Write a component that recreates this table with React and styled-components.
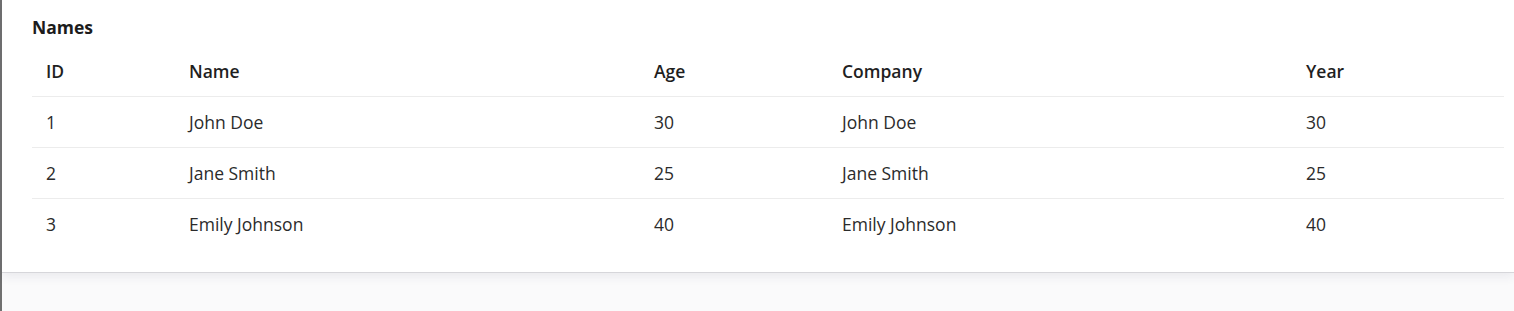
import React from "react";
import styled, { createGlobalStyle } from "styled-components";

const GlobalStyle = createGlobalStyle`
  html, body {
    margin: 0;
    padding: 0;
    background: #fafafb;
    font-family: "Open Sans", "Liberation Sans", sans-serif;
    color: #212121;
  }
`;

const Page = styled.div`
  min-height: 311px;
  border-left: 2px solid #707070;
  background: #fafafb;
`;

const Card = styled.section`
  background: #ffffff;
  padding: 15px 10px 23px 30px;
  border-bottom: 1px solid #d6d6da;
  box-shadow: 0 3px 10px rgba(60, 60, 90, 0.09);
`;

const Title = styled.h2`
  margin: 0 0 5px;
  font-size: 17.5px;
  font-weight: 700;
  line-height: 25px;
  color: #1c1c1c;
`;

const Table = styled.table`
  width: 100%;
  border-collapse: collapse;
  table-layout: fixed;
  font-size: 17.5px;
`;

const Th = styled.th`
  box-sizing: border-box;
  width: ${(p) => p.$w}px;
  text-align: left;
  font-weight: 600;
  padding: 14px 14px 13px;
  line-height: 24px;
  border-bottom: 1px solid #ececec;
  color: #1f1f1f;
`;

const Row = styled.tr`
  &:not(:last-child) td {
    border-bottom: 1px solid #ececec;
  }
`;

const Td = styled.td`
  padding: 13px 14px;
  line-height: 24px;
  color: #2b2b2b;
`;

const columns = [
  { key: "id", label: "ID", w: 143 },
  { key: "name", label: "Name", w: 465 },
  { key: "age", label: "Age", w: 188 },
  { key: "company", label: "Company", w: 464 },
  { key: "year", label: "Year", w: 212 },
];

const rows = [
  { id: 1, name: "John Doe", age: 30, company: "John Doe", year: 30 },
  { id: 2, name: "Jane Smith", age: 25, company: "Jane Smith", year: 25 },
  { id: 3, name: "Emily Johnson", age: 40, company: "Emily Johnson", year: 40 },
];

export default function App() {
  return (
    <>
      <GlobalStyle />
      <Page>
        <Card>
          <Title>Names</Title>
          <Table>
            <thead>
              <tr>
                {columns.map((c) => (
                  <Th key={c.key} $w={c.w}>
                    {c.label}
                  </Th>
                ))}
              </tr>
            </thead>
            <tbody>
              {rows.map((r) => (
                <Row key={r.id}>
                  {columns.map((c) => (
                    <Td key={c.key}>{r[c.key]}</Td>
                  ))}
                </Row>
              ))}
            </tbody>
          </Table>
        </Card>
      </Page>
    </>
  );
}
